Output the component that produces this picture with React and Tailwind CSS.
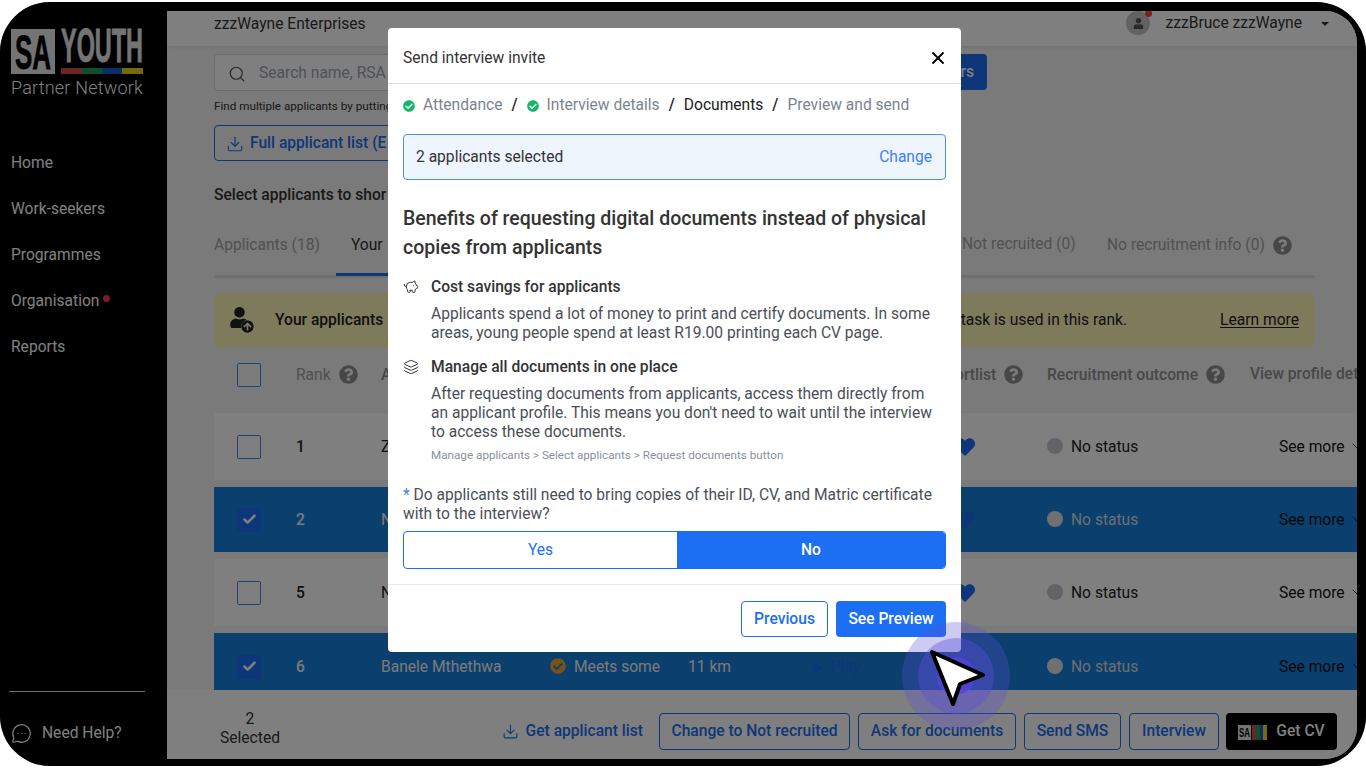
import { Search, Download, X, ChevronDown, PiggyBank, Layers, MessageCircleMore, Check, Play } from 'lucide-react'
import { FaCheckCircle, FaQuestionCircle, FaHeart, FaUser, FaArrowCircleUp } from 'react-icons/fa'

const navItems = ['Home', 'Work-seekers', 'Programmes', 'Organisation', 'Reports']

const rows = [
  { rank: '1', name: 'Z', height: 'h-[67px]' },
  { rank: '2', name: 'N', height: 'h-[65px]', selected: true },
  { rank: '5', name: 'N', height: 'h-[67px]' },
  { rank: '6', name: 'Banele Mthethwa', height: 'h-[67px]', selected: true, match: 'Meets some', distance: '11 km', play: true },
]

const gridCols = 'grid grid-cols-[59px_85px_169px_138px_124px_143px_92px_232px_100px] items-center pl-[23px]'

function Help() {
  return <FaQuestionCircle className="ml-2 shrink-0 text-[19px] text-[#8f8f8f]" />
}

function Checkbox({ checked }) {
  if (checked) {
    return (
      <div className="flex h-6 w-6 items-center justify-center rounded-[2px] bg-[#1a6ef0]">
        <Check size={15} strokeWidth={4} className="text-white" />
      </div>
    )
  }
  return <div className="h-6 w-6 rounded-[2px] border-[1.5px] border-[#3f82ee] bg-white/40" />
}

function Logo() {
  return (
    <svg width="134" height="50" viewBox="0 0 134 50" className="block">
      <rect x="0" y="3" width="44" height="45" fill="#e8e8e8" />
      <text x="4" y="43" textLength="36" lengthAdjust="spacingAndGlyphs" fontFamily="Liberation Sans" fontWeight="700" fontSize="48" fill="#000" stroke="#000" strokeWidth="0.8">SA</text>
      <text x="50" y="36" textLength="82" lengthAdjust="spacingAndGlyphs" fontFamily="Liberation Sans" fontWeight="700" fontSize="49" fill="#e8e8e8" stroke="#e8e8e8" strokeWidth="0.8">YOUTH</text>
      <rect x="50" y="42" width="21" height="6" fill="#e04a4a" />
      <rect x="71" y="42" width="20" height="6" fill="#18a058" />
      <rect x="91" y="42" width="20" height="6" fill="#1a5fd0" />
      <rect x="111" y="42" width="21" height="6" fill="#f0d020" />
    </svg>
  )
}

function Sidebar() {
  return (
    <aside className="flex w-[167px] shrink-0 flex-col pl-[11px] text-white">
      <div className="mt-[15px]">
        <Logo />
      </div>
      <div className="text-[18px] leading-[24px] font-light tracking-[0.2px] whitespace-nowrap">Partner Network</div>
      <nav className="mt-[52px] flex flex-col gap-[22px]">
        {navItems.map((item) => (
          <div key={item} className="flex h-6 items-center text-[15.6px]">
            {item}
            {item === 'Organisation' && <span className="mb-2 ml-1 h-[7px] w-[7px] rounded-full bg-[#ff3b3b]" />}
          </div>
        ))}
      </nav>
      <div className="mt-auto mr-[22px] -ml-[2px] border-t border-[#dddddd]" />
      <div className="mt-[30px] mb-[14px] flex items-center text-[15.6px]">
        <MessageCircleMore size={21} strokeWidth={1.4} />
        <span className="ml-[10px]">Need Help?</span>
      </div>
    </aside>
  )
}

function TableRow({ row }) {
  return (
    <div className={`${gridCols} ${row.height} ${row.selected ? 'bg-[#167edc] text-[#f5f5f5]' : 'bg-white text-[#222222]'} mb-[7px] shrink-0 text-[15.6px]`}>
      <Checkbox checked={row.selected} />
      <div className="pt-[2px] font-medium">{row.rank}</div>
      <div className="pt-[2px] whitespace-nowrap">{row.name}</div>
      <div className="flex items-center whitespace-nowrap">
        {row.match && <FaCheckCircle className="mr-2 text-[16px] text-[#f5a32c]" />}
        <span className="pt-[2px]">{row.match}</span>
      </div>
      <div className="pt-[2px]">{row.distance}</div>
      <div className="flex items-center pt-[2px] text-[#1a6ef0]">
        {row.play && <><Play size={11} fill="currentColor" className="mr-2" />Play</>}
      </div>
      <div><FaHeart className="text-[20px] text-[#1a6ef0]" /></div>
      <div className="flex items-center">
        <span className={`mr-2 h-4 w-4 rounded-full ${row.selected ? 'bg-[#e0e0e0]' : 'bg-[#c2c7cc]'}`} />
        <span className={row.selected ? 'pt-[2px] text-[#dddddd]' : 'pt-[2px]'}>No status</span>
      </div>
      <div className="flex items-center text-[#111111] whitespace-nowrap">
        <span className="pt-[2px]">See more</span>
        <ChevronDown size={16} strokeWidth={1.2} className="ml-1" />
      </div>
    </div>
  )
}

function Main() {
  return (
    <main className="flex min-w-0 flex-1 flex-col overflow-hidden rounded-tr-[32px] rounded-br-[32px] bg-[#f4f4f4]">
      <header className="flex h-[35px] shrink-0 items-center bg-white pr-[28px] pl-[47px] text-[15.6px] text-[#333333] shadow-[0_1px_3px_rgba(0,0,0,0.08)]">
        <span className="-mt-[7px]">zzzWayne Enterprises</span>
        <div className="relative ml-auto -mt-[11px] flex h-[24px] w-[24px] items-center justify-center rounded-full bg-[#c4c4c4]">
          <FaUser className="text-[11px] text-[#555555]" />
          <span className="absolute -top-[1px] -right-[2px] h-[7px] w-[7px] rounded-full bg-[#ff3b3b]" />
        </div>
        <span className="-mt-[10px] ml-[15px]">zzzBruce zzzWayne</span>
        <span className="-mt-[9px] ml-[19px] h-0 w-0 border-x-[4px] border-t-[4px] border-x-transparent border-t-[#333333]" />
      </header>

      <div className="min-h-0 flex-1 overflow-hidden pl-[47px]">
        <div className="mt-[8px] flex w-[773px]">
          <div className="flex h-[37px] flex-1 items-center rounded-l-[4px] border border-[#d6d6d6] bg-white pt-[2px] pl-[13px] text-[15.6px] text-[#9ca3af]">
            <Search size={18} strokeWidth={1.6} className="mr-[13px] text-[#555555]" />
            Search name, RSA
          </div>
          <div className="flex h-[36px] w-[110px] items-center justify-end rounded-r-[4px] bg-[#1a6ef0] pt-[2px] pr-[13px] text-[15.6px] font-medium text-white">Filters</div>
        </div>
        <div className="mt-[7px] text-[11.7px] leading-4 text-[#333333]">Find multiple applicants by putting</div>
        <div className="mt-[11px] flex h-[36px] w-[300px] items-center rounded-[4px] border border-[#1a6ef0] pt-[2px] pl-[11px] text-[15.6px] font-medium text-[#1a6ef0]">
          <Download size={18} strokeWidth={1.5} className="mr-[6px]" />
          Full applicant list (E
        </div>
        <div className="mt-[22px] text-[15.6px] leading-6 font-medium text-[#333333]">Select applicants to shor</div>

        <div className="mt-[26px] flex h-[45px] w-[1101px] border-b-[3px] border-[#dfdfdf] pb-[18px] text-[15.6px] leading-6 text-[#a3a3a3]">
          <span className="w-[122px] shrink-0">Applicants (18)</span>
          <div className="relative w-[626px] shrink-0 text-[#333333]">
            <span className="ml-[15px]">Your</span>
            <span className="absolute top-[40px] left-0 h-[3px] w-[120px] bg-[#1a6ef0]" />
          </div>
          <span className="w-[145px] shrink-0 -mt-[1px]">Not recruited (0)</span>
          <span className="flex items-center whitespace-nowrap">No recruitment info (0)<Help /></span>
        </div>

        <div className="mt-[15px] flex h-[54px] w-[1101px] items-center rounded-[4px] bg-[#fdf5b8] pr-[16px] pl-[15px] text-[15.6px] text-[#222222]">
          <span className="relative h-[26px] w-[46px] shrink-0">
            <FaUser className="absolute top-0 left-0 text-[21px]" />
            <FaArrowCircleUp className="absolute top-[13px] left-[12px] rounded-full bg-[#fdf5b8] text-[13px]" />
          </span>
          <span className="pt-[2px] font-medium">Your applicants</span>
          <span className="mr-[93px] ml-auto pt-[2px]">task is used in this rank.</span>
          <span className="pt-[2px] underline underline-offset-2">Learn more</span>
        </div>

        <div className={`${gridCols} h-[66px] pb-[10px] text-[15.6px] font-medium text-[#909090]`}>
          <Checkbox />
          <div className="flex items-center font-normal text-[#a0a0a0]"><span className="pt-[2px]">Rank</span><Help /></div>
          <div className="pt-[2px]">A</div>
          <div />
          <div />
          <div />
          <div className="-ml-[18px] flex items-center whitespace-nowrap"><span className="pt-[2px]">Shortlist</span><Help /></div>
          <div className="flex items-center whitespace-nowrap"><span className="pt-[2px]">Recruitment outcome</span><Help /></div>
          <div className="-ml-[29px] whitespace-nowrap">View profile details</div>
        </div>

        {rows.map((row) => (
          <TableRow key={row.rank} row={row} />
        ))}
      </div>

      <footer className="flex h-[69px] shrink-0 items-center bg-white pt-[13px] pr-[20px] text-[15.6px] font-medium text-[#1a6ef0]">
        <div className="-mt-[5px] w-[166px] text-center leading-[19px] font-normal text-[#333333]">
          <div>2</div>
          <div>Selected</div>
        </div>
        <div className="ml-auto flex items-center gap-2">
          <div className="mr-2 flex items-center pt-[2px]">
            <Download size={17} strokeWidth={1.5} className="mr-[7px]" />
            Get applicant list
          </div>
          <div className="flex h-[37px] w-[191px] items-center justify-center rounded-[4px] border border-[#1a6ef0] pt-[2px]">Change to Not recruited</div>
          <div className="flex h-[37px] w-[158px] items-center justify-center rounded-[4px] border border-[#1a6ef0] pt-[2px]">Ask for documents</div>
          <div className="flex h-[37px] w-[97px] items-center justify-center rounded-[4px] border border-[#1a6ef0] pt-[2px]">Send SMS</div>
          <div className="flex h-[37px] w-[90px] items-center justify-center rounded-[4px] border border-[#1a6ef0] pt-[2px]">Interview</div>
          <div className="ml-[-1px] flex h-[37px] w-[111px] items-center justify-center rounded-[4px] bg-black pt-[2px] text-white">
            <svg width="29" height="15" viewBox="0 0 29 15" className="mr-[9px]">
              <rect width="13" height="15" fill="#e8e8e8" />
              <text x="1" y="12" textLength="11" lengthAdjust="spacingAndGlyphs" fontFamily="Liberation Sans" fontWeight="700" fontSize="12" fill="#000">SA</text>
              <rect x="14" width="4" height="15" fill="#e04a4a" />
              <rect x="18" width="4" height="15" fill="#18a058" />
              <rect x="22" width="3" height="15" fill="#1a5fd0" />
              <rect x="25" width="4" height="15" fill="#f0d020" />
            </svg>
            Get CV
          </div>
        </div>
      </footer>
    </main>
  )
}

function Step({ done, active, children }) {
  return (
    <span className={`flex items-center ${active ? 'text-[#222222]' : 'text-[#7b8490]'}`}>
      {done && <FaCheckCircle className="mr-2 text-[12px] text-[#12b76a]" />}
      {children}
    </span>
  )
}

function Slash() {
  return <span className="mx-[9px] font-medium text-[#222222]">/</span>
}

function Benefit({ icon, title, children }) {
  return (
    <div>
      <div className="flex items-center text-[15.6px] leading-5 font-medium text-[#333333]">
        <span className="flex w-[28px] shrink-0">{icon}</span>
        {title}
      </div>
      <div className="mt-[8px] pr-[12px] pl-[28px] text-[15.6px] leading-[19px] text-[#4a4f57]">{children}</div>
    </div>
  )
}

function Modal() {
  return (
    <div className="absolute top-[26px] left-[388px] flex h-[624px] w-[573px] flex-col rounded-[4px] bg-white">
      <div className="flex h-[56px] shrink-0 items-center justify-between border-b border-[#dddddd] pt-[7px] pr-[13px] pl-[15px] text-[15.6px] text-[#333333]">
        Send interview invite
        <X size={20} strokeWidth={2.2} className="-mt-[2px] text-black" />
      </div>
      <div className="flex-1 px-[15px]">
        <div className="mt-[10px] flex h-6 items-center text-[15.6px]">
          <Step done>Attendance</Step>
          <Slash />
          <Step done>Interview details</Step>
          <Slash />
          <Step active>Documents</Step>
          <Slash />
          <Step>Preview and send</Step>
        </div>
        <div className="mt-[16px] flex h-[46px] items-center justify-between rounded-[4px] border border-[#4f8fef] bg-[#eff5fd] pt-[1px] pr-[13px] pl-3 text-[15.6px] text-[#333333]">
          2 applicants selected
          <span className="text-[#3b82f6]">Change</span>
        </div>
        <h2 className="mt-[24px] text-[19.5px] leading-[29px] font-medium text-[#333333]">
          Benefits of requesting digital documents instead of physical copies from applicants
        </h2>
        <div className="mt-[15px] flex flex-col gap-[14px]">
          <Benefit icon={<PiggyBank size={16} strokeWidth={1.5} />} title="Cost savings for applicants">
            Applicants spend a lot of money to print and certify documents. In some areas, young people spend at least R19.00 printing each CV page.
          </Benefit>
          <Benefit icon={<Layers size={16} strokeWidth={1.5} />} title="Manage all documents in one place">
            After requesting documents from applicants, access them directly from an applicant profile. This means you don't need to wait until the interview to access these documents.
            <div className="mt-[5px] text-[11.7px] leading-4 text-[#8a9099]">Manage applicants &gt; Select applicants &gt; Request documents button</div>
          </Benefit>
        </div>
        <div className="mt-[23px] text-[15.6px] leading-[19px] text-[#4a4f57]">
          <span className="text-[#3b82f6]">* </span>Do applicants still need to bring copies of their ID, CV, and Matric certificate with to the interview?
        </div>
        <div className="mt-[7px] flex h-[38px] overflow-hidden rounded-[4px] border border-[#1c6ef2] text-[15.6px]">
          <div className="flex w-[273px] items-center justify-center pt-[2px] text-[#1c6ef2]">Yes</div>
          <div className="flex flex-1 items-center justify-center bg-[#1c6ef2] pt-[2px] font-medium text-white">No</div>
        </div>
      </div>
      <div className="flex h-[68px] shrink-0 items-center justify-end gap-2 border-t border-[#e5e7eb] px-[15px] text-[15.6px] font-medium">
        <div className="flex h-[36px] w-[87px] items-center justify-center rounded-[4px] border border-[#1c6ef2] pt-[2px] text-[#1c6ef2]">Previous</div>
        <div className="flex h-[36px] w-[110px] items-center justify-center rounded-[4px] bg-[#1c6ef2] pt-[2px] text-white">See Preview</div>
      </div>
    </div>
  )
}

function Pointer() {
  return (
    <svg width="112" height="112" viewBox="0 0 112 112" className="absolute top-[618px] left-[900px]">
      <circle cx="56" cy="56" r="54" fill="#5b50d6" fillOpacity="0.3" />
      <circle cx="56" cy="56" r="38" fill="#5b50d6" fillOpacity="0.4" />
      <circle cx="56" cy="56" r="19" fill="#5b3fe0" fillOpacity="0.7" />
      <path d="M32 32 L83 55 L60 64 L53 84 Z" fill="#fff" stroke="#000" strokeWidth="4" strokeLinejoin="round" />
    </svg>
  )
}

export default function App() {
  return (
    <div className="h-[768px] w-[1366px] overflow-hidden bg-white pt-[2px] font-['Roboto',sans-serif]">
      <div className="relative h-[764px] w-[1366px] overflow-hidden rounded-[50px] bg-black">
        <div className="flex h-full pt-[9px] pr-[9px] pb-[7px]">
          <Sidebar />
          <Main />
        </div>
        <div className="absolute inset-0 bg-black/50" />
        <Modal />
        <Pointer />
      </div>
    </div>
  )
}
